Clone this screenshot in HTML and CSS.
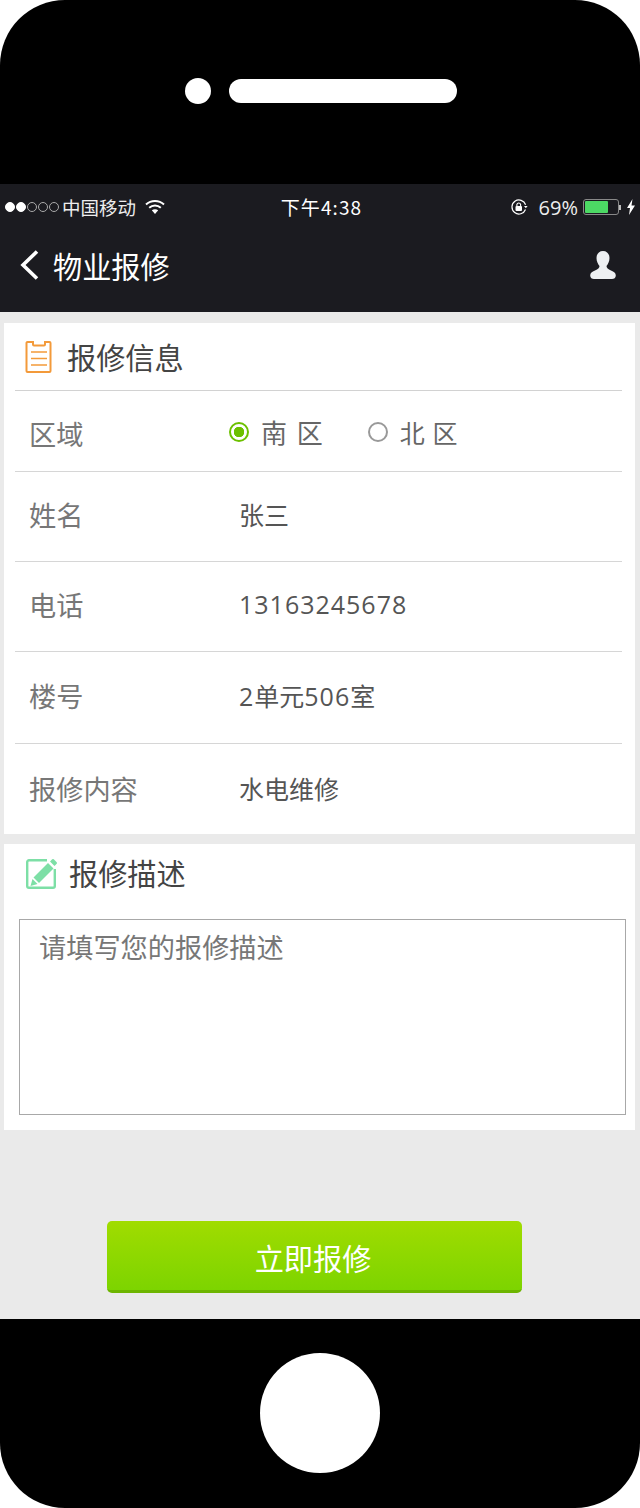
FILE: index.html
```html
<!DOCTYPE html>
<html lang="zh">
<head>
  <meta charset="UTF-8" />
  <title>物业报修</title>
  <link rel="stylesheet" href="styles.css">
</head>
<body>
  <div class="phone">
    <!-- 顶部听筒 -->
    <div class="phone-top">
      <span class="camera"></span>
      <span class="speaker"></span>
    </div>

    <div class="screen">
      <header class="header">
        <div class="status-bar">
          <div class="status-left">
            <span class="signal">
              <i class="dot on"></i><i class="dot on"></i><i class="dot"></i><i class="dot"></i><i class="dot"></i>
            </span>
            <span class="carrier">中国移动</span>
            <svg class="wifi" width="20" height="16" viewBox="0 0 20 16">
              <path d="M1 5.500C6 .8 14 .8 19 5.500" fill="none" stroke="#fff" stroke-width="2" />
              <path d="M4.200 8.800C7.500 5.800 12.500 5.800 15.800 8.800" fill="none" stroke="#fff" stroke-width="2" />
              <path d="M6.800 11.300C8.700 9.800 11.300 9.800 13.200 11.300L10 15z" fill="#fff" />
            </svg>
          </div>
          <span class="clock">下午4:38</span>
          <div class="status-right">
            <svg class="lock" width="18" height="18" viewBox="0 0 18 18">
              <path d="M15.500 11.500A7 7 0 1 1 15.600 6.800" fill="none" stroke="#fff" stroke-width="1.200" />
              <path d="M14 8h3.600l-1.800 2.200z" fill="#fff" />
              <rect x="5.500" y="8" width="6.500" height="5" rx="1" fill="#fff" />
              <path d="M6.900 8V6.400a1.900 1.900 0 0 1 3.700 0V8" fill="none" stroke="#fff" stroke-width="1.100" />
            </svg>
            <span class="battery-pct">69%</span>
            <span class="battery"><span class="battery-level"></span></span>
            <span class="battery-tip"></span>
            <svg class="bolt" width="8" height="16" viewBox="0 0 8 16">
              <path d="M5.500 0L0 9h3l-1 7L8 6.500H4.500z" fill="#fff" />
            </svg>
          </div>
        </div>
        <div class="nav-bar">
          <svg class="back" width="22" height="34" viewBox="0 0 22 34">
            <path d="M18 3.500L4 17l14 13.500" fill="none" stroke="#fff" stroke-width="3.600" />
          </svg>
          <span class="nav-title">物业报修</span>
          <svg class="user" width="26" height="30" viewBox="0 0 26 30">
            <path d="M13 1c4 0 6.500 3 6.500 7 0 3.500-1.500 6-3 8 0 2 1.500 3 4.500 4.500 3 1.300 4.800 2.500 4.800 5 0 2.500-1.800 3.500-3.800 3.500H4c-2 0-3.800-1-3.800-3.500 0-2.500 1.800-3.700 4.800-5C8 19 9.500 18 9.500 16c-1.500-2-3-4.500-3-8 0-4 2.500-7 6.500-7z" fill="#eef0f2" />
          </svg>
        </div>
      </header>

      <main class="content">
        <section class="card info-card">
          <div class="card-title">
            <svg class="card-icon" width="28" height="34" viewBox="0 0 28 34">
              <path d="M8 2H2.500A1 1 0 0 0 1.500 3v28a1 1 0 0 0 1 1h22a1 1 0 0 0 1-1V3a1 1 0 0 0-1-1H20v2.500a1 1 0 0 1-1 1H9a1 1 0 0 1-1-1z" fill="none" stroke="#f39a3a" stroke-width="2" />
              <path d="M6 12h16M6 18.500h16M6 25h16" stroke="#f39a3a" stroke-width="1.700" />
            </svg>
            <h2>报修信息</h2>
          </div>
          <div class="row row-area">
            <span class="label">区域</span>
            <div class="value radios">
              <span class="radio checked"><i class="radio-mark"></i>南 区</span>
              <span class="radio"><i class="radio-mark"></i>北 区</span>
            </div>
          </div>
          <div class="row row-name">
            <span class="label">姓名</span>
            <span class="value">张三</span>
          </div>
          <div class="row row-phone">
            <span class="label">电话</span>
            <span class="value number">13163245678</span>
          </div>
          <div class="row row-room">
            <span class="label">楼号</span>
            <span class="value"><span class="number">2</span>单元<span class="number">506</span>室</span>
          </div>
          <div class="row row-type">
            <span class="label">报修内容</span>
            <span class="value">水电维修</span>
          </div>
        </section>

        <section class="card desc-card">
          <div class="card-title">
            <svg class="card-icon" width="32" height="32" viewBox="0 0 32 32">
              <path d="M21 2.200H3a1.800 1.800 0 0 0-1.800 1.800v24a1.800 1.800 0 0 0 1.800 1.800h24a1.800 1.800 0 0 0 1.800-1.800V11" fill="none" stroke="#7ddfa6" stroke-width="2.400" />
              <path d="M22 5l5.500 5.500L13 25l-5.500-5.500z" fill="#7ddfa6" />
              <path d="M6.500 21l5 5-7 2z" fill="#7ddfa6" />
              <path d="M24 3.500l2.200-2.200q.8-.7 1.600 0l2.900 2.900q.7.8 0 1.600L28.500 8z" fill="#7ddfa6" />
            </svg>
            <h2>报修描述</h2>
          </div>
          <div class="textarea">请填写您的报修描述</div>
        </section>

        <div class="actions">
          <button class="submit" type="button">立即报修</button>
        </div>
      </main>
    </div>

    <!-- 底部 Home 键 -->
    <div class="phone-bottom">
      <span class="home"></span>
    </div>
  </div>
</body>
</html>
```

FILE: styles.css
```css
* {
  box-sizing: border-box;
}

body {
  margin: 0;
  background: #fff;
  font-family: "Noto Sans CJK SC", "Open Sans", sans-serif;
}

.phone {
  width: 640px;
  height: 1508px;
  background: #000;
  border-radius: 65px;
  overflow: hidden;
  display: flex;
  flex-direction: column;
}

.phone-top {
  height: 184px;
  padding: 78px 0 0 185px;
  display: flex;
  align-items: flex-start;
  gap: 18px;
  flex-shrink: 0;
}

.camera {
  width: 26px;
  height: 26px;
  border-radius: 50%;
  background: #fff;
}

.speaker {
  width: 228px;
  height: 24px;
  margin-top: 1px;
  border-radius: 12px;
  background: #fff;
}

.screen {
  height: 1135px;
  background: #eaeaea;
  flex-shrink: 0;
  display: flex;
  flex-direction: column;
}

/* 顶部状态栏和导航 */
.header {
  height: 128px;
  background: #1b1b20;
  color: #fff;
  flex-shrink: 0;
}

.status-bar {
  height: 46px;
  padding: 0 5px;
  display: grid;
  grid-template-columns: 1fr auto 1fr;
  align-items: center;
}

.status-left,
.status-right {
  display: flex;
  align-items: center;
}

.status-right {
  justify-content: flex-end;
}

.signal {
  display: flex;
  gap: 1px;
  margin-right: 3px;
}

.dot {
  width: 10px;
  height: 10px;
  border-radius: 50%;
  border: 1px solid #aaa;
}

.dot.on {
  background: #fff;
  border-color: #fff;
}

.carrier {
  font-size: 18.500px;
  line-height: 24px;
  color: #eee;
}

.wifi {
  margin-left: 9px;
}

.clock {
  margin-left: 3px;
  font-size: 19px;
  line-height: 24px;
  letter-spacing: 1.100px;
}

.lock {
  margin-right: 11px;
}

.battery-pct {
  font-family: "Open Sans", sans-serif;
  font-size: 20px;
  margin-right: 5px;
  color: #eee;
}

.battery {
  width: 36px;
  height: 16px;
  border: 1px solid #888;
  border-radius: 3px;
  padding: 1px;
  display: flex;
}

.battery-level {
  width: 23px;
  background: #4cd964;
  border-radius: 1px;
}

.battery-tip {
  width: 2px;
  height: 5px;
  margin-right: 6px;
  background: #bbb;
}

.nav-bar {
  height: 82px;
  padding: 0 24px 12px 19px;
  display: flex;
  align-items: center;
}

.back {
  margin-right: 12px;
}

.nav-title {
  flex: 1;
  font-size: 29.200px;
  line-height: 40px;
}

/* 内容区 */
.content {
  flex: 1;
  padding: 11px 5px 0 4px;
  display: flex;
  flex-direction: column;
}

.card {
  background: #fff;
}

.info-card {
  height: 511px;
  padding: 0 13px 0 11px;
}

.desc-card {
  height: 286px;
  margin-top: 10px;
  padding: 0 9px 0 15px;
}

.card-title {
  display: flex;
  align-items: center;
}

.info-card .card-title {
  height: 68px;
  padding: 0 0 0 10px;
  gap: 14px;
  border-bottom: 1px solid #d2d2d2;
}

.desc-card .card-title {
  height: 60px;
  padding: 0 0 0 7px;
  gap: 11px;
}

.card-title h2 {
  margin: 0 0 2px;
  font-size: 29.200px;
  line-height: 40px;
  font-weight: 400;
  color: #444;
}

.desc-card .card-title h2 {
  margin-bottom: 4px;
}

.row {
  display: flex;
  align-items: center;
  border-bottom: 1px solid #d6d6d6;
}

.row-area {
  height: 81px;
  padding-top: 4px;
}

.row-name {
  height: 90px;
  padding-bottom: 6px;
}

.row-phone {
  height: 90px;
  padding-bottom: 5px;
}

.row-room {
  height: 92px;
  padding-bottom: 5px;
}

.row-type {
  height: 90px;
  padding-bottom: 3px;
  border-bottom: 0;
}

.label {
  width: 224px;
  padding-left: 14px;
  font-size: 27.200px;
  line-height: 36px;
  color: #777;
  flex-shrink: 0;
}

.value {
  font-size: 25px;
  line-height: 36px;
  color: #555;
}

.number {
  font-family: "Open Sans", sans-serif;
  letter-spacing: 1px;
}

.radios {
  display: flex;
  gap: 45px;
  margin-left: -9px;
  margin-bottom: 3px;
}

.radio {
  display: flex;
  align-items: center;
  font-size: 25px;
  word-spacing: 2px;
  color: #666;
}

.radio.checked {
  font-size: 26px;
  word-spacing: 4px;
}

.radio-mark {
  width: 20px;
  height: 20px;
  margin-right: 12px;
  border-radius: 50%;
  border: 2px solid #999;
}

.radio.checked .radio-mark {
  margin-left: -1px;
  border-color: #6cc000;
  background: radial-gradient(circle, #6cc000 0, #6cc000 5px, #fff 5.500px);
}

.textarea {
  height: 196px;
  margin-top: 15px;
  padding: 6px 20px 6px 19px;
  border: 1px solid #a8a8a8;
  font-size: 27.200px;
  line-height: 40px;
  color: #777;
}

.actions {
  margin-top: 91px;
  display: flex;
  padding-left: 103px;
}

.submit {
  width: 415px;
  height: 72px;
  padding: 2px 3px 0 0;
  border: 0;
  border-bottom: 3px solid #6db500;
  border-radius: 5px;
  background: linear-gradient(#a0dc00, #7dd400);
  color: #fff;
  font-family: inherit;
  font-size: 29.200px;
}

.phone-bottom {
  flex: 1;
  display: flex;
  justify-content: center;
  padding-top: 34px;
}

.home {
  width: 120px;
  height: 120px;
  border-radius: 50%;
  background: #fff;
}
```
